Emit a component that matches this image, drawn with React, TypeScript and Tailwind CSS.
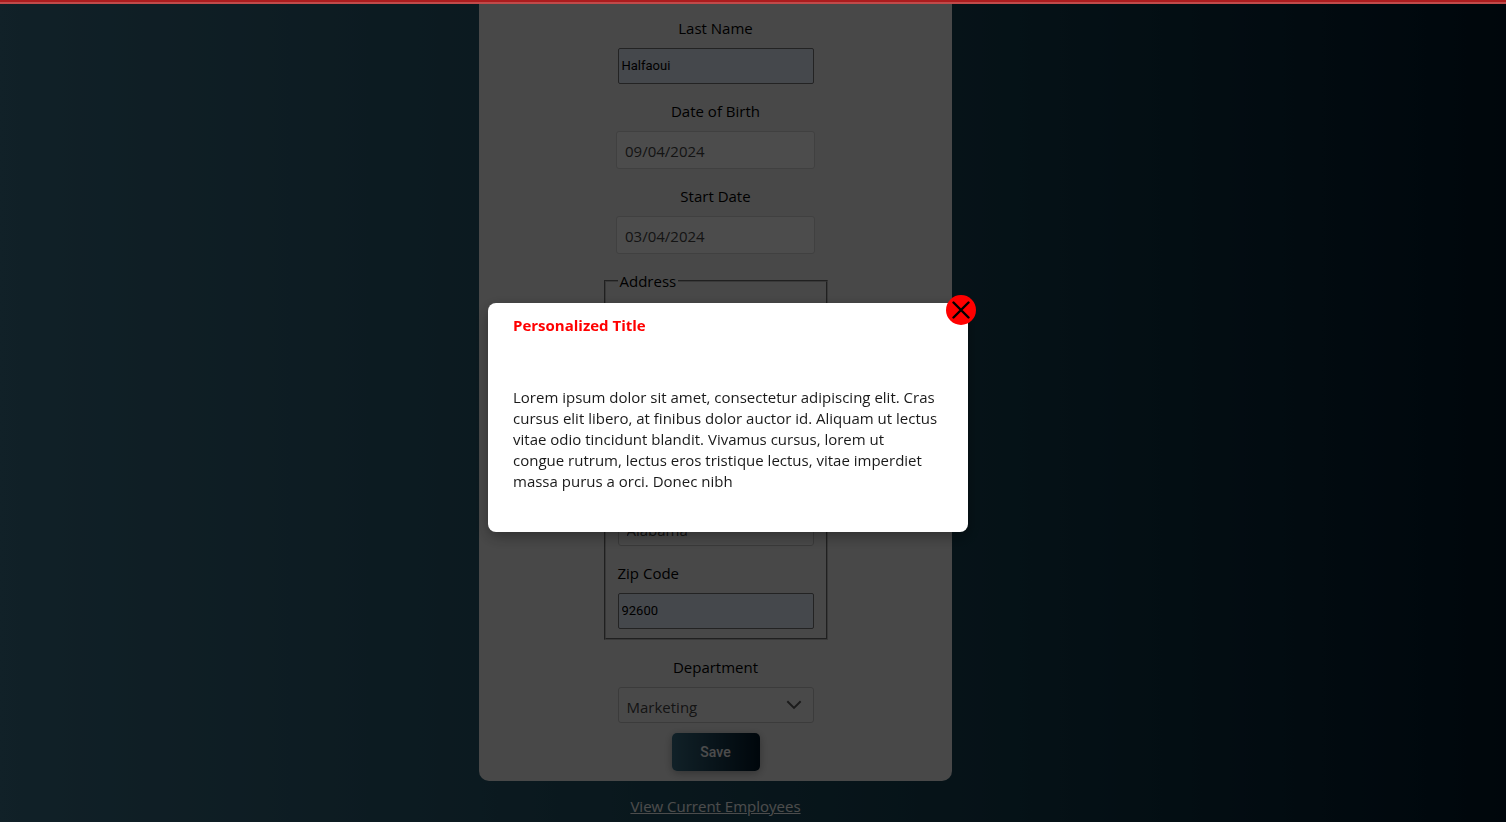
import { useState } from "react";

const labelClass = "mb-2 block text-[15px] leading-6 text-black";
const filledInput =
  "block h-9 w-full rounded-xs border border-[#767676] bg-[#e8f0fe] px-[3px] pb-0.5 font-[Roboto,Arial,sans-serif] text-[13px] text-black";
const dateInput =
  "block h-[38px] w-full rounded-[3px] border border-[#d5d5d5] bg-white px-2 pt-0.5 text-[15px] text-[#454545]";

function TextField({ id, label, value }: { id: string; label: string; value: string }) {
  return (
    <div>
      <label htmlFor={id} className={labelClass}>{label}</label>
      <input id={id} type="text" defaultValue={value} className={filledInput} />
    </div>
  );
}

function DateField({ id, label, value }: { id: string; label: string; value: string }) {
  return (
    <div className="w-[199px]">
      <label htmlFor={id} className={labelClass + " text-center"}>{label}</label>
      <input id={id} type="text" defaultValue={value} className={dateInput} />
    </div>
  );
}

function SelectField({ id, label, options }: { id: string; label: string; options: string[] }) {
  return (
    <div>
      <label htmlFor={id} className={labelClass}>{label}</label>
      <div className="relative">
        <select
          id={id}
          className="block h-9 w-full appearance-none rounded-[3px] border border-[#c5c5c5] bg-[#f6f6f6] px-2 pt-1 text-[15px] text-[#454545]"
        >
          {options.map((o) => (
            <option key={o}>{o}</option>
          ))}
        </select>
        <svg
          aria-hidden="true"
          viewBox="0 0 16 10"
          className="pointer-events-none absolute top-[13px] right-3 h-[10px] w-4"
          fill="none"
          stroke="#5c5c5c"
          strokeWidth="2"
        >
          <path d="M1.3 1.2 8 7.9l6.7-6.7" />
        </svg>
      </div>
    </div>
  );
}

function Modal({ onClose }: { onClose: () => void }) {
  return (
    <div className="fixed inset-0 z-10 flex items-center justify-center bg-black/70 pt-[13px] pr-[50px]">
      <div
        role="dialog"
        aria-modal="true"
        aria-labelledby="modal-title"
        className="relative w-full max-w-[480px] rounded-lg bg-white pt-3 pr-[30px] pb-10 pl-[25px] text-[15px] leading-[21px] text-[#1a1a1a] shadow-[0_5px_15px_rgba(0,0,0,0.35)]"
      >
        <h2 id="modal-title" className="mb-[51px] font-bold text-[#ff0000]">Personalized Title</h2>
        <p>
          Lorem ipsum dolor sit amet, consectetur adipiscing elit. Cras cursus elit libero, at finibus
          dolor auctor id. Aliquam ut lectus vitae odio tincidunt blandit. Vivamus cursus, lorem ut
          congue rutrum, lectus eros tristique lectus, vitae imperdiet massa purus a orci. Donec nibh
        </p>
        <button
          type="button"
          aria-label="Close"
          onClick={onClose}
          className="absolute -top-2 -right-2 flex size-[30px] items-center justify-center rounded-full bg-[#ff0000]"
        >
          <svg viewBox="0 0 18 18" className="size-[18px]" fill="none" stroke="#000" strokeWidth="2.4" strokeLinecap="round">
            <path d="M1.5 1.5l15 15M16.5 1.5l-15 15" />
          </svg>
        </button>
      </div>
    </div>
  );
}

export default function App() {
  const [open, setOpen] = useState(true);
  return (
    <div className="min-h-screen bg-linear-to-r/srgb from-[#396e85] via-[#143f50] via-65% to-[#001728] font-['Open_Sans','Noto_Sans',sans-serif]">
      <header className="relative z-20 h-1 border-b-2 border-[#c04a4a] bg-[#ab1c1e]" />
      <main className="flex flex-col items-center pr-[75px] pb-1">
        <form
          onSubmit={(e) => {
            e.preventDefault();
            setOpen(true);
          }}
          className="flex w-full max-w-[473px] flex-col items-center gap-[15px] rounded-b-[10px] bg-[#f2f2f2] pt-3 pb-[10px]"
        >
          <div className="w-[196px] text-center">
            <label htmlFor="last-name" className={labelClass}>Last Name</label>
            <input id="last-name" type="text" defaultValue="Halfaoui" className={filledInput} />
          </div>
          <DateField id="birth" label="Date of Birth" value="09/04/2024" />
          <DateField id="start" label="Start Date" value="03/04/2024" />
          <fieldset className="flex w-56 flex-col gap-[15px] border-2 border-[#c0c0c0] px-3 pt-[19px] pb-[9px] [border-style:groove]">
            <legend className="px-0.5 text-[15px] leading-6 text-black">Address</legend>
            <TextField id="street" label="Street" value="" />
            <TextField id="city" label="City" value="" />
            <SelectField id="state" label="State" options={["Alabama", "Alaska", "Arizona"]} />
            <TextField id="zip" label="Zip Code" value="92600" />
          </fieldset>
          <div className="flex w-[196px] flex-col gap-[10px] text-center">
            <SelectField id="department" label="Department" options={["Marketing", "Sales", "Engineering"]} />
            <button
              type="submit"
              className="h-[38px] w-[88px] self-center rounded-[5px] bg-linear-to-r/srgb from-[#396e85] to-[#001728] font-[Roboto,Arial,sans-serif] text-[14px] font-medium text-white shadow-[0_2px_8px_rgba(0,0,0,0.3)]"
            >
              Save
            </button>
          </div>
        </form>
        <a href="#employees" className="mt-[13px] text-[15px] leading-6 text-white underline">
          View Current Employees
        </a>
      </main>
      {open && <Modal onClose={() => setOpen(false)} />}
    </div>
  );
}
